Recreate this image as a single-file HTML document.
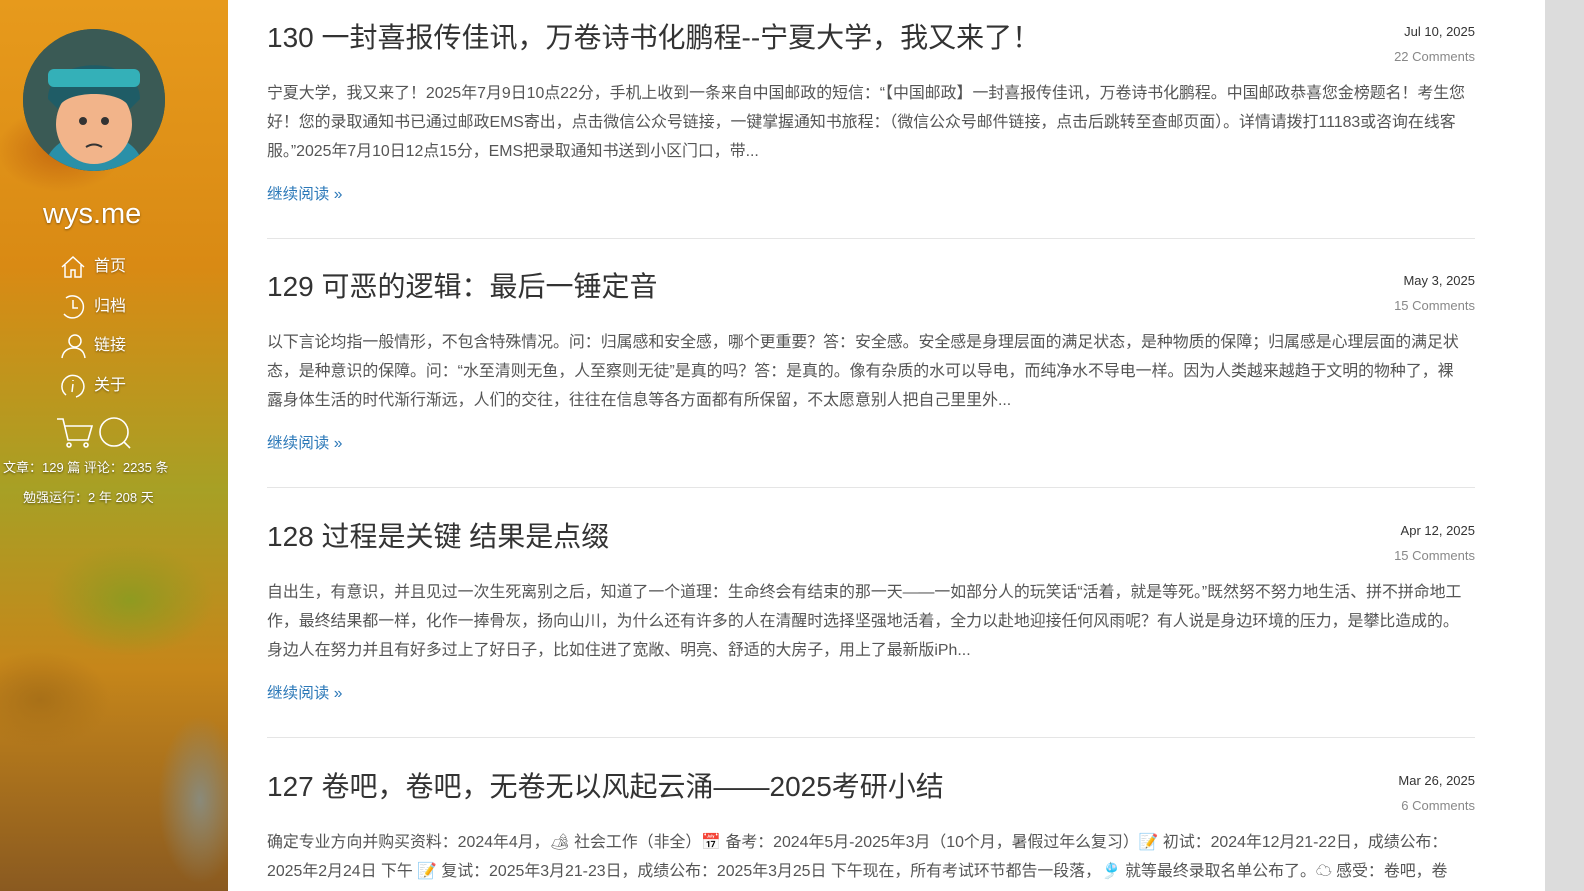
<!DOCTYPE html><html><head><meta charset="utf-8"><style>
body{margin:0;width:1584px;height:891px;overflow:hidden;background:#fff;font-family:"Liberation Sans","Noto Sans CJK SC",sans-serif;position:relative}
.side{position:absolute;left:0;top:0;width:228px;height:891px;background:
radial-gradient(ellipse 90px 60px at 60px 150px,#c56a10 0%,transparent 70%),
radial-gradient(ellipse 120px 80px at 130px 600px,#8f9a20 0%,transparent 70%),
radial-gradient(ellipse 100px 70px at 40px 700px,#a87018 0%,transparent 70%),
radial-gradient(ellipse 60px 120px at 200px 800px,#8a8a7a 0%,transparent 70%),
linear-gradient(180deg,#e79a1c 0%,#d98a14 30%,#a7a025 55%,#c6861a 75%,#8a5a20 100%);color:#fff}
.av{position:absolute;left:23px;top:29px;width:142px;height:142px;border-radius:50%;overflow:hidden;background:#2a4a48}
.name{position:absolute;left:43px;top:198px;font-size:29px;text-shadow:0 1px 2px #0006}
.nav{position:absolute;left:60px;font-size:16px;text-shadow:0 1px 2px #0006}
.nav svg{vertical-align:middle;margin-right:8px}
.st{position:absolute;font-size:13px;text-shadow:0 1px 2px #0008}
.sb{position:absolute;left:1545px;top:0;width:39px;height:891px;background:#dcdcdc}
.post{position:absolute;left:267px;width:1208px}
.t{font-size:28px;color:#333;position:absolute;top:-4px;left:0}
.d{position:absolute;right:0;top:-1px;font-size:13px;color:#333;text-align:right;line-height:25px}
.d span{color:#888}
.e{position:absolute;top:59px;left:0;width:1200px;font-size:15.9px;line-height:29px;color:#555}
.r{position:absolute;top:162px;font-size:15.6px;color:#2b78b8}
.hr{position:absolute;top:218px;left:0;width:1208px;height:1px;background:#e5e5e5}
</style></head><body>
<div class="side">
<div class="av"><svg width="142" height="142" viewBox="0 0 142 142"><rect width="142" height="142" fill="#3a5a55"/><path d="M20 150c0-30 20-45 51-45s51 15 51 45z" fill="#2a90a8"/><ellipse cx="71" cy="95" rx="38" ry="40" fill="#f2b48a"/><path d="M25 70c0-45 92-45 92 0l-10 10c-5-20-67-20-72 0z" fill="#1f5c66"/><rect x="25" y="40" width="92" height="18" rx="6" fill="#34b0b8"/><circle cx="60" cy="92" r="4" fill="#333"/><circle cx="82" cy="92" r="4" fill="#333"/><path d="M63 118q8-5 16 0" stroke="#333" stroke-width="2" fill="none"/></svg></div>
<div class="name">wys.me</div>
<div class="nav" style="top:252px"><svg width="26" height="26" viewBox="0 0 26 26" fill="none" stroke="#fff" stroke-width="1.5"><path d="M2 13L13 3l11 10M5 11v12h6v-7h4v7h6V11"/></svg>首页</div>
<div class="nav" style="top:292px"><svg width="26" height="26" viewBox="0 0 26 26" fill="none" stroke="#fff" stroke-width="1.5"><path d="M6 4a11 11 0 1 1-2 16"/><path d="M13 6v8h5"/></svg>归档</div>
<div class="nav" style="top:331px"><svg width="26" height="26" viewBox="0 0 26 26" fill="none" stroke="#fff" stroke-width="1.5"><circle cx="15" cy="8" r="6"/><path d="M2 25c1-7 6-10 12-10s10 3 11 10"/></svg>链接</div>
<div class="nav" style="top:371px"><svg width="26" height="26" viewBox="0 0 26 26" fill="none" stroke="#fff" stroke-width="1.5"><path d="M6 22a11 11 0 1 1 10 2"/><path d="M13 11l-1 8M13 7v1"/></svg>关于</div>
<svg style="position:absolute;left:55px;top:416px" width="80" height="34" viewBox="0 0 80 34" fill="none" stroke="#fff" stroke-width="1.6"><path d="M2 3h6l5 21h20l4-14H10"/><circle cx="14" cy="29" r="2"/><circle cx="31" cy="29" r="2"/><circle cx="59" cy="16" r="14"/><path d="M69 26l6 6"/></svg>
<div class="st" style="left:3px;top:457px">文章：129 篇 评论：2235 条</div>
<div class="st" style="left:23px;top:487px">勉强运行：2 年 208 天</div>
</div>
<div class="sb"></div>

<div class="post" style="top:20px"><div class="t">130 一封喜报传佳讯，万卷诗书化鹏程--宁夏大学，我又来了！</div><div class="d">Jul 10, 2025<br><span>22 Comments</span></div>
<div class="e">宁夏大学，我又来了！2025年7月9日10点22分，手机上收到一条来自中国邮政的短信：“【中国邮政】一封喜报传佳讯，万卷诗书化鹏程。中国邮政恭喜您金榜题名！考生您好！您的录取通知书已通过邮政EMS寄出，点击微信公众号链接，一键掌握通知书旅程：（微信公众号邮件链接，点击后跳转至查邮页面）。详情请拨打11183或咨询在线客服。”2025年7月10日12点15分，EMS把录取通知书送到小区门口，带...</div>
<div class="r">继续阅读 »</div><div class="hr"></div></div>

<div class="post" style="top:269px"><div class="t">129 可恶的逻辑：最后一锤定音</div><div class="d">May 3, 2025<br><span>15 Comments</span></div>
<div class="e">以下言论均指一般情形，不包含特殊情况。问：归属感和安全感，哪个更重要？答：安全感。安全感是身理层面的满足状态，是种物质的保障；归属感是心理层面的满足状态，是种意识的保障。问：“水至清则无鱼，人至察则无徒”是真的吗？答：是真的。像有杂质的水可以导电，而纯净水不导电一样。因为人类越来越趋于文明的物种了，裸露身体生活的时代渐行渐远，人们的交往，往往在信息等各方面都有所保留，不太愿意别人把自己里里外...</div>
<div class="r">继续阅读 »</div><div class="hr"></div></div>

<div class="post" style="top:519px"><div class="t">128 过程是关键 结果是点缀</div><div class="d">Apr 12, 2025<br><span>15 Comments</span></div>
<div class="e">自出生，有意识，并且见过一次生死离别之后，知道了一个道理：生命终会有结束的那一天——一如部分人的玩笑话“活着，就是等死。”既然努不努力地生活、拼不拼命地工作，最终结果都一样，化作一捧骨灰，扬向山川，为什么还有许多的人在清醒时选择坚强地活着，全力以赴地迎接任何风雨呢？有人说是身边环境的压力，是攀比造成的。身边人在努力并且有好多过上了好日子，比如住进了宽敞、明亮、舒适的大房子，用上了最新版iPh...</div>
<div class="r">继续阅读 »</div><div class="hr"></div></div>

<div class="post" style="top:769px"><div class="t">127 卷吧，卷吧，无卷无以风起云涌——2025考研小结</div><div class="d">Mar 26, 2025<br><span>6 Comments</span></div>
<div class="e">确定专业方向并购买资料：2024年4月，🏕 社会工作（非全）📅 备考：2024年5月-2025年3月（10个月，暑假过年么复习）📝 初试：2024年12月21-22日，成绩公布：2025年2月24日 下午 📝 复试：2025年3月21-23日，成绩公布：2025年3月25日 下午现在，所有考试环节都告一段落，🎐 就等最终录取名单公布了。☁ 感受：卷吧，卷</div></div>
</body></html>
